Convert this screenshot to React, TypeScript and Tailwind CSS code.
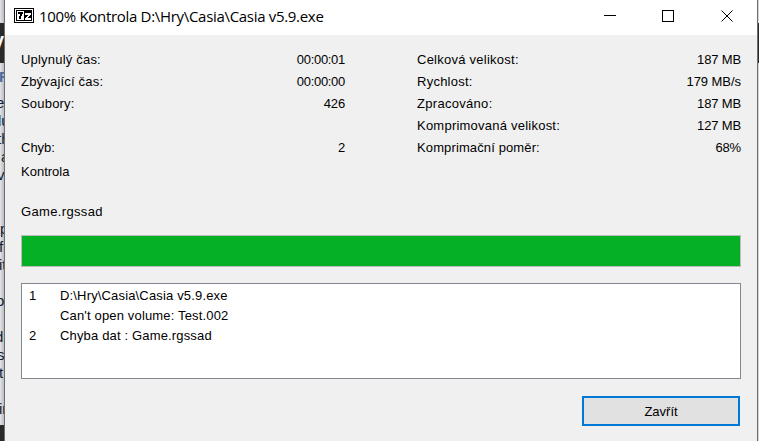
function Stat({ label, value, labelClass = "", valueClass = "tracking-[-0.15px]" }: { label: string; value: string; labelClass?: string; valueClass?: string }) {
  return (
    <div className="flex h-[22px] justify-between leading-[22px] whitespace-pre">
      <span className={labelClass}>{label}</span>
      <span className={valueClass}>{value}</span>
    </div>
  );
}

function SevenZipIcon() {
  return (
    <svg width="20" height="15" viewBox="0 0 20 15" shapeRendering="crispEdges">
      <rect width="20" height="15" fill="#000" />
      <rect x="1" y="1" width="18" height="13" fill="#fff" />
      <rect x="2" y="2" width="16" height="11" fill="#000" />
      <rect x="3" y="3" width="7" height="9" fill="#fff" />
      <path d="M4 4h5v2h-1v2h-1v3h-2v-3h1v-2h-2z" fill="#000" />
      <path d="M11 5h6v2h-1v1h-1v1h-1v1h3v2h-6v-2h1v-1h1v-1h1v-1h-3z" fill="#fff" />
    </svg>
  );
}

const fragments: [string, string][] = [
  ["e", "-ml-[4px]"],
  ["lu", "-ml-[2px]"],
  ["th", "-ml-[3px]"],
  ["a", "ml-px"],
  ["vi", "-ml-[3px]"],
  ["", ""],
  ["", ""],
  ["p", "ml-0"],
  ["fi", "-ml-px"],
  ["it", "-ml-px"],
  ["", ""],
  ["o", "-ml-[4px]"],
  ["", ""],
  ["d", "-ml-[5px]"],
  ["s", "-ml-[3px]"],
  ["t", "-ml-px"],
  ["", ""],
  ["in", "-ml-px"],
];

function PageBehind() {
  return (
    <div className="flex h-full w-1 shrink-0 flex-col overflow-hidden bg-linear-to-r from-[#e3e5e8] to-[#b9bcc0] text-[15px] text-[#111a30]">
      <div className="h-[23px] shrink-0" />
      <div className="h-10 shrink-0 bg-[#292929] pt-2 text-[18px] leading-[24px] font-bold text-white">
        <div className="-ml-2">V</div>
      </div>
      <div className="h-[31px] shrink-0 pt-[4px] text-[15px] leading-[20px] font-bold text-[#4b6c9e]">
        <div className="-ml-px">F</div>
      </div>
      {fragments.map(([text, offset], i) => (
        <div key={i} className="h-[18px] shrink-0 leading-[18px] whitespace-pre">
          <div className={offset}>{text}</div>
        </div>
      ))}
      <div className="mt-auto h-4 shrink-0 bg-[#292929]" />
    </div>
  );
}

export default function App() {
  return (
    <div className="flex h-[441px] w-[759px] overflow-hidden bg-[#d2d5d9] font-['Liberation_Sans',sans-serif]">
      <PageBehind />
      <div className="flex w-[754px] shrink-0 flex-col border-x border-[#6c6e70] bg-[#f0f0f0] text-[13px] text-black">
        <header className="flex h-[35px] shrink-0 items-start bg-white pl-[9px]">
          <div className="pt-2">
            <SevenZipIcon />
          </div>
          <h1 className="mt-[6px] ml-[5px] grow font-['Open_Sans',sans-serif] text-[15px] leading-5 tracking-[-0.31px] whitespace-pre">
            100% Kontrola D:\Hry\Casia\Casia v5.9.exe
          </h1>
          <svg width="153" height="32" viewBox="0 0 153 32" fill="none" stroke="#000">
            <path d="M0 15.5h12M58.5 10.5h11v11h-11z" shapeRendering="crispEdges" />
            <path d="M117.5 10.5l11 11M128.5 10.5l-11 11" />
          </svg>
        </header>
        <main className="flex flex-col px-4">
          <div className="mt-[14px] flex justify-between">
            <section className="w-[324px]">
              <Stat label="Uplynulý čas:" value="00:00:01" labelClass="tracking-[0.2px]" valueClass="tracking-[-0.3px]" />
              <Stat label="Zbývající čas:" value="00:00:00" labelClass="tracking-[0.2px]" valueClass="tracking-[-0.3px]" />
              <Stat label="Soubory:" value="426" labelClass="tracking-[0.2px]" />
              <div className="h-[22px]" />
              <Stat label="Chyb:" value="2" />
            </section>
            <section className="w-[324px]">
              <Stat label="Celková velikost:" value="187 MB" labelClass="tracking-[0.25px]" />
              <Stat label="Rychlost:" value="179 MB/s" labelClass="tracking-[0.25px]" valueClass="tracking-[-0.05px]" />
              <Stat label="Zpracováno:" value="187 MB" labelClass="tracking-[0.3px]" />
              <Stat label="Komprimovaná velikost:" value="127 MB" labelClass="tracking-[0.23px]" />
              <Stat label="Komprimační poměr:" value="68%" labelClass="tracking-[0.12px]" />
            </section>
          </div>
          <div className="mt-[2px] leading-[22px]">Kontrola</div>
          <div className="mt-[18px] leading-[22px] tracking-[0.35px]">Game.rgssad</div>
          <div className="mt-[12px] h-8 border border-[#bcbcbc] bg-[#06b025]" />
          <div className="mt-4 grid h-24 grid-cols-[31px_1fr] content-start border border-[#828790] bg-white pt-[2px] pl-[7px] leading-5 tracking-[0.16px] whitespace-pre">
            <span>1</span>
            <span>D:\Hry\Casia\Casia v5.9.exe</span>
            <span />
            <span>Can't open volume: Test.002</span>
            <span>2</span>
            <span>Chyba dat : Game.rgssad</span>
          </div>
          <button className="mt-[17px] mr-px h-[30px] w-[158px] self-end border-2 border-[#0078d7] bg-[#e1e1e1] pt-px leading-[26px]">Zavřít</button>
        </main>
      </div>
      <div className="flex w-px flex-col">
        <div className="mt-[23px] h-10 bg-[#292929]" />
      </div>
    </div>
  );
}
